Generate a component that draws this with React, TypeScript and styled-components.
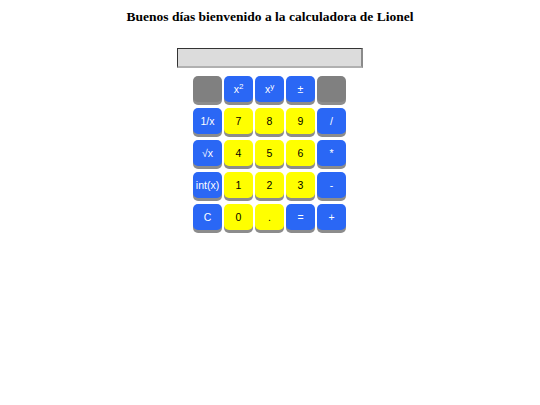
import React, { useState } from 'react';
import styled, { createGlobalStyle } from 'styled-components';

type Kind = 'blue' | 'yellow' | 'gray';

interface Key {
  label: React.ReactNode;
  kind: Kind;
  value: string;
}

const keys: Key[] = [
  { label: '', kind: 'gray', value: '' },
  { label: <>x<sup>2</sup></>, kind: 'blue', value: 'sq' },
  { label: <>x<sup>y</sup></>, kind: 'blue', value: 'pow' },
  { label: '±', kind: 'blue', value: 'neg' },
  { label: '', kind: 'gray', value: '' },
  { label: '1/x', kind: 'blue', value: 'inv' },
  { label: '7', kind: 'yellow', value: '7' },
  { label: '8', kind: 'yellow', value: '8' },
  { label: '9', kind: 'yellow', value: '9' },
  { label: '/', kind: 'blue', value: '/' },
  { label: '√x', kind: 'blue', value: 'sqrt' },
  { label: '4', kind: 'yellow', value: '4' },
  { label: '5', kind: 'yellow', value: '5' },
  { label: '6', kind: 'yellow', value: '6' },
  { label: '*', kind: 'blue', value: '*' },
  { label: 'int(x)', kind: 'blue', value: 'int' },
  { label: '1', kind: 'yellow', value: '1' },
  { label: '2', kind: 'yellow', value: '2' },
  { label: '3', kind: 'yellow', value: '3' },
  { label: '-', kind: 'blue', value: '-' },
  { label: 'C', kind: 'blue', value: 'C' },
  { label: '0', kind: 'yellow', value: '0' },
  { label: '.', kind: 'yellow', value: '.' },
  { label: '=', kind: 'blue', value: '=' },
  { label: '+', kind: 'blue', value: '+' },
];

export default function App() {
  const [display, setDisplay] = useState('');

  const press = (v: string) => {
    if (!v) return;
    if (v === 'C') return setDisplay('');
    if (v === '=') {
      try {
        // eslint-disable-next-line no-new-func
        setDisplay(String(Function(`return (${display})`)()));
      } catch {
        setDisplay('Error');
      }
      return;
    }
    const n = parseFloat(display);
    if (v === 'sq') return setDisplay(String(n * n));
    if (v === 'pow') return setDisplay(display + '**');
    if (v === 'neg') return setDisplay(String(-n));
    if (v === 'inv') return setDisplay(String(1 / n));
    if (v === 'sqrt') return setDisplay(String(Math.sqrt(n)));
    if (v === 'int') return setDisplay(String(Math.trunc(n)));
    setDisplay(display + v);
  };

  return (
    <Page>
      <GlobalStyle />
      <Title>Buenos días bienvenido a la calculadora de Lionel</Title>
      <Display value={display} readOnly />
      <Keypad>
        {keys.map((k, i) => (
          <KeyButton key={i} kind={k.kind} onClick={() => press(k.value)}>
            {k.label}
          </KeyButton>
        ))}
      </Keypad>
    </Page>
  );
}

const GlobalStyle = createGlobalStyle`
  body { margin: 0; background: #fff; }
`;

const Page = styled.div`
  display: flex;
  flex-direction: column;
  align-items: center;
  font-family: "Liberation Serif", serif;
`;

const Title = styled.h1`
  font-size: 13.5px;
  line-height: 16px;
  font-weight: bold;
  margin: 9px 0 23px;
  color: #000;
`;

const Display = styled.input`
  box-sizing: border-box;
  width: 186px;
  height: 20px;
  background: #dcdcdc;
  border-style: solid;
  border-width: 1px 2px 2px 1px;
  border-color: #333 #8a8a8a #b0b0b0 #333;
  margin: 0 0 8px;
  padding: 0 4px;
  font-family: "Liberation Sans", Arial, sans-serif;
`;

const Keypad = styled.div`
  display: grid;
  grid-template-columns: repeat(5, 29px);
  column-gap: 2px;
  row-gap: 3px;
  margin-right: 1px;
`;

const colors: Record<Kind, { bg: string; fg: string }> = {
  blue: { bg: '#2a67f5', fg: '#fff' },
  yellow: { bg: '#ffff00', fg: '#000' },
  gray: { bg: '#808080', fg: '#fff' },
};

const KeyButton = styled.button<{ kind: Kind }>`
  width: 29px;
  height: 26px;
  margin-bottom: 3px;
  padding: 0;
  border: none;
  border-radius: 5px;
  background: ${p => colors[p.kind].bg};
  color: ${p => colors[p.kind].fg};
  box-shadow: 0 3px 0 #8c8c8c;
  font-family: "Liberation Sans", Arial, sans-serif;
  font-size: 10.5px;
  cursor: pointer;

  sup {
    font-size: 8px;
    line-height: 0;
    vertical-align: 4px;
  }
`;
